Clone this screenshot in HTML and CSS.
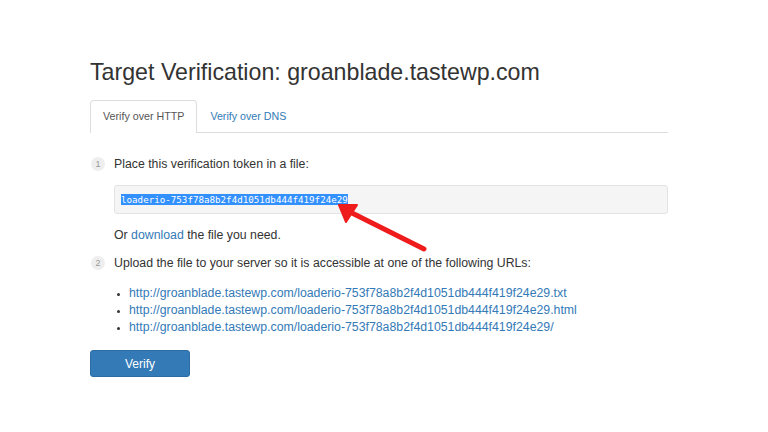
FILE: index.html
```html
<!DOCTYPE html>
<html>
<head>
<meta charset="utf-8">
<link rel="stylesheet" href="styles.css">
</head>
<body>
<div class="page">
  <h1 class="title">Target Verification: groanblade.tastewp.com</h1>
  <div class="tabs">
    <div class="tab active">Verify over HTTP</div>
    <div class="tab">Verify over DNS</div>
  </div>
  <div class="step step-first">
    <span class="badge">1</span>
    <span class="step-text">Place this verification token in a file:</span>
  </div>
  <div class="token-wrap">
    <div class="token"><span class="sel">loaderio-753f78a8b2f4d1051db444f419f24e29</span></div>
  </div>
  <p class="or">Or <a class="link">download</a> the file you need.</p>
  <div class="step step-second">
    <span class="badge">2</span>
    <span class="step-text">Upload the file to your server so it is accessible at one of the following URLs:</span>
  </div>
  <ul class="urls">
    <li><a class="link">http://groanblade.tastewp.com/loaderio-753f78a8b2f4d1051db444f419f24e29.txt</a></li>
    <li><a class="link">http://groanblade.tastewp.com/loaderio-753f78a8b2f4d1051db444f419f24e29.html</a></li>
    <li><a class="link">http://groanblade.tastewp.com/loaderio-753f78a8b2f4d1051db444f419f24e29/</a></li>
  </ul>
  <button class="btn">Verify</button>
</div>
<svg class="arrow" width="768" height="432" viewBox="0 0 768 432">
  <line x1="424" y1="249" x2="352" y2="213" stroke="#ee1c1c" stroke-width="5" stroke-linecap="round"/>
  <polygon points="339,205 357,205 346,222" fill="#ee1c1c" stroke="#ee1c1c" stroke-width="2" stroke-linejoin="round"/>
</svg>
</body>
</html>
```
FILE: styles.css
```css
html, body {
  margin: 0;
  padding: 0;
  background: #fff;
}
body {
  font-family: "Liberation Sans", Arial, sans-serif;
  color: #333;
  font-size: 12.3px;
  position: relative;
  width: 768px;
  height: 432px;
  overflow: hidden;
}
.page {
  padding: 58px 100px 0 90px;
}
.title {
  margin: 0;
  font-weight: normal;
  font-size: 23.2px;
  line-height: 28px;
  color: #333;
}
.tabs {
  display: flex;
  margin-top: 14px;
  border-bottom: 1px solid #ddd;
  height: 32px;
}
.tab {
  padding: 0 12px;
  line-height: 31px;
  color: #337ab7;
  font-size: 10.7px;
  border: 1px solid transparent;
  border-bottom: none;
  border-radius: 4px 4px 0 0;
  margin-bottom: -1px;
}
.tab.active {
  color: #555;
  border-color: #ddd;
  background: #fff;
  height: 32px;
}
.step {
  display: flex;
  align-items: center;
  height: 16px;
}
.step-first {
  margin-top: 23px;
}
.step-second {
  margin-top: 12px;
}
.badge {
  display: inline-flex;
  align-items: center;
  justify-content: center;
  width: 14px;
  height: 14px;
  border-radius: 50%;
  background: #eee;
  color: #999;
  font-size: 9px;
  margin-left: 1px;
  margin-right: 9px;
}
.step-text {
  font-size: 12.3px;
}
.token-wrap {
  padding-left: 24px;
  margin-top: 13px;
}
.token {
  background: #f5f5f5;
  border: 1px solid #e3e3e3;
  border-radius: 3px;
  display: flex;
  align-items: center;
  padding-left: 6px;
  padding-bottom: 1px;
  box-sizing: border-box;
  height: 29px;
}
.sel {
  font-family: "DejaVu Sans Mono", "Liberation Mono", monospace;
  font-size: 9.2px;
  background: #3390ff;
  color: #fff;
  line-height: 11px;
}
.or {
  margin: 13px 0 0 24px;
  font-size: 12.3px;
  line-height: 16px;
}
.link {
  color: #337ab7;
  text-decoration: none;
}
.urls {
  margin: 14px 0 0 0;
  padding-left: 39px;
  list-style: disc;
  font-size: 12.3px;
  line-height: 17px;
}
.urls li::marker {
  color: #333;
  font-size: 9px;
}
.btn {
  display: block;
  margin-top: 14px;
  width: 100px;
  height: 27px;
  border: 1px solid #2e6da4;
  border-radius: 3px;
  background: #337ab7;
  color: #fff;
  font-family: "Liberation Sans", Arial, sans-serif;
  font-size: 12px;
  padding: 0;
}
.arrow {
  position: absolute;
  left: 0;
  top: 0;
  pointer-events: none;
}
```
